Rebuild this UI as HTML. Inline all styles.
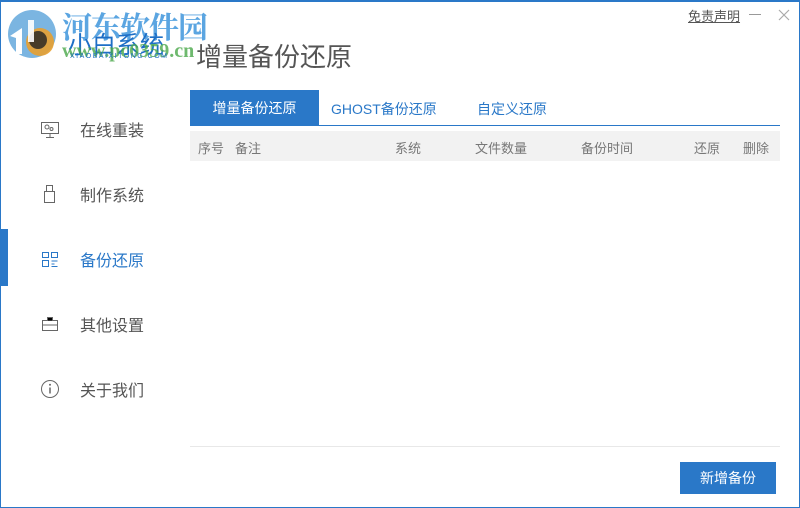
<!DOCTYPE html>
<html><head><meta charset="utf-8"><style>
*{margin:0;padding:0;box-sizing:border-box}
body{width:800px;height:508px;overflow:hidden;background:#fff;font-family:"Liberation Sans","Noto Sans CJK SC",sans-serif;position:relative}
.frame{position:absolute;left:0;top:0;width:800px;height:508px;border:1px solid #2a78c8;border-top:2px solid #2a78c8}
.abs{position:absolute;white-space:nowrap}
.nav{position:absolute;left:80px;font-size:16px;color:#555}
.ico{position:absolute;left:40px}
.th{position:absolute;top:138px;font-size:13px;color:#777}
</style></head><body>
<div class="frame"></div>
<svg class="abs" style="left:2px;top:6px" width="60" height="54" viewBox="0 0 60 54">
<circle cx="30" cy="28" r="24" fill="#5aa3da" opacity="0.8"/>
<circle cx="38" cy="36" r="14" fill="#e8a030" opacity="0.9"/>
<circle cx="36" cy="34" r="9" fill="#222" opacity="0.8"/>
<path d="M8 30 L20 22 L20 48 L14 48 L14 32 Z" fill="#fff"/>
<path d="M26 14 L32 14 L32 36 L26 36Z" fill="#fff" opacity="0.9"/>
</svg>
<div class="abs" style="left:62px;top:3px;font-size:30px;font-weight:bold;color:#3f96dc;opacity:0.85;font-family:'Noto Serif CJK SC',serif;letter-spacing:-1px">河东软件园</div>
<div class="abs" style="left:68px;top:25px;font-size:24px;color:#1e6fc6">小白系统</div>
<div class="abs" style="left:62px;top:40px;font-size:20px;font-weight:bold;color:#4aa84a;opacity:0.8;font-family:'Liberation Serif',serif">www.pc0359.cn</div>
<div class="abs" style="left:70px;top:53px;font-size:7px;color:#1e6fc6;letter-spacing:1.5px">XIAOBAIXITONG.COM</div>
<div class="abs" style="left:196px;top:37px;font-size:26px;color:#555">增量备份还原</div>
<div class="abs" style="left:688px;top:6px;font-size:13px;color:#555;text-decoration:underline">免责声明</div>
<div class="abs" style="left:749px;top:14px;width:12px;height:1px;background:#999"></div>
<svg class="abs" style="left:778px;top:9px" width="12" height="12"><path d="M1 1L11 11M11 1L1 11" stroke="#aaa" stroke-width="1.2"/></svg>
<div class="abs" style="left:0;top:229px;width:8px;height:57px;background:#2a78c8"></div>
<svg class="ico" style="top:121px" width="20" height="18" viewBox="0 0 20 18"><rect x="1.5" y="1.5" width="17" height="11" fill="none" stroke="#666"/><circle cx="7" cy="6" r="2" fill="none" stroke="#666"/><circle cx="11.5" cy="8" r="1.5" fill="none" stroke="#666"/><path d="M10 13v3M6 16.5h8" stroke="#666"/></svg>
<div class="nav" style="top:117px">在线重装</div>
<svg class="ico" style="top:184px" width="20" height="22" viewBox="0 0 20 22"><rect x="6.5" y="1.5" width="6" height="6" fill="none" stroke="#666"/><rect x="4.5" y="7.5" width="10" height="11" fill="none" stroke="#666"/></svg>
<div class="nav" style="top:182px">制作系统</div>
<svg class="ico" style="top:250px" width="20" height="20" viewBox="0 0 20 20"><rect x="2.5" y="2.5" width="6" height="5" fill="none" stroke="#2a78c8"/><rect x="11.5" y="2.5" width="6" height="5" fill="none" stroke="#2a78c8"/><rect x="2.5" y="10.5" width="6" height="6" fill="none" stroke="#2a78c8"/><path d="M11.5 11h6M11.5 14h3M11.5 16.5h6" stroke="#2a78c8"/></svg>
<div class="nav" style="top:247px;color:#2a78c8">备份还原</div>
<svg class="ico" style="top:314px" width="20" height="20" viewBox="0 0 20 20"><rect x="2.5" y="6.5" width="15" height="10" fill="none" stroke="#666"/><path d="M7.5 6.5v-3h5v3M2.5 11h15" stroke="#666"/></svg>
<div class="nav" style="top:312px">其他设置</div>
<svg class="ico" style="top:378px" width="22" height="22" viewBox="0 0 22 22"><circle cx="10" cy="11" r="8.5" fill="none" stroke="#666"/><path d="M10 9.5v6" stroke="#666" stroke-width="1.5"/><circle cx="10" cy="6.8" r="1" fill="#666"/></svg>
<div class="nav" style="top:377px">关于我们</div>
<div class="abs" style="left:190px;top:90px;width:129px;height:35px;background:#2a78c8;color:#fff;font-size:14px;text-align:center;line-height:36px">增量备份还原</div>
<div class="abs" style="left:331px;top:99px;font-size:14px;color:#2a78c8">GHOST备份还原</div>
<div class="abs" style="left:477px;top:99px;font-size:14px;color:#2a78c8">自定义还原</div>
<div class="abs" style="left:190px;top:125px;width:590px;height:1px;background:#2a78c8"></div>
<div class="abs" style="left:190px;top:131px;width:590px;height:30px;background:#f2f2f2"></div>
<div class="th" style="left:198px">序号</div>
<div class="th" style="left:235px">备注</div>
<div class="th" style="left:395px">系统</div>
<div class="th" style="left:475px">文件数量</div>
<div class="th" style="left:581px">备份时间</div>
<div class="th" style="left:694px">还原</div>
<div class="th" style="left:743px">删除</div>
<div class="abs" style="left:190px;top:446px;width:590px;height:1px;background:#e8e8e8"></div>
<div class="abs" style="left:680px;top:462px;width:96px;height:32px;background:#2a78c8;color:#fff;font-size:14px;text-align:center;line-height:32px">新增备份</div>
</body></html>
